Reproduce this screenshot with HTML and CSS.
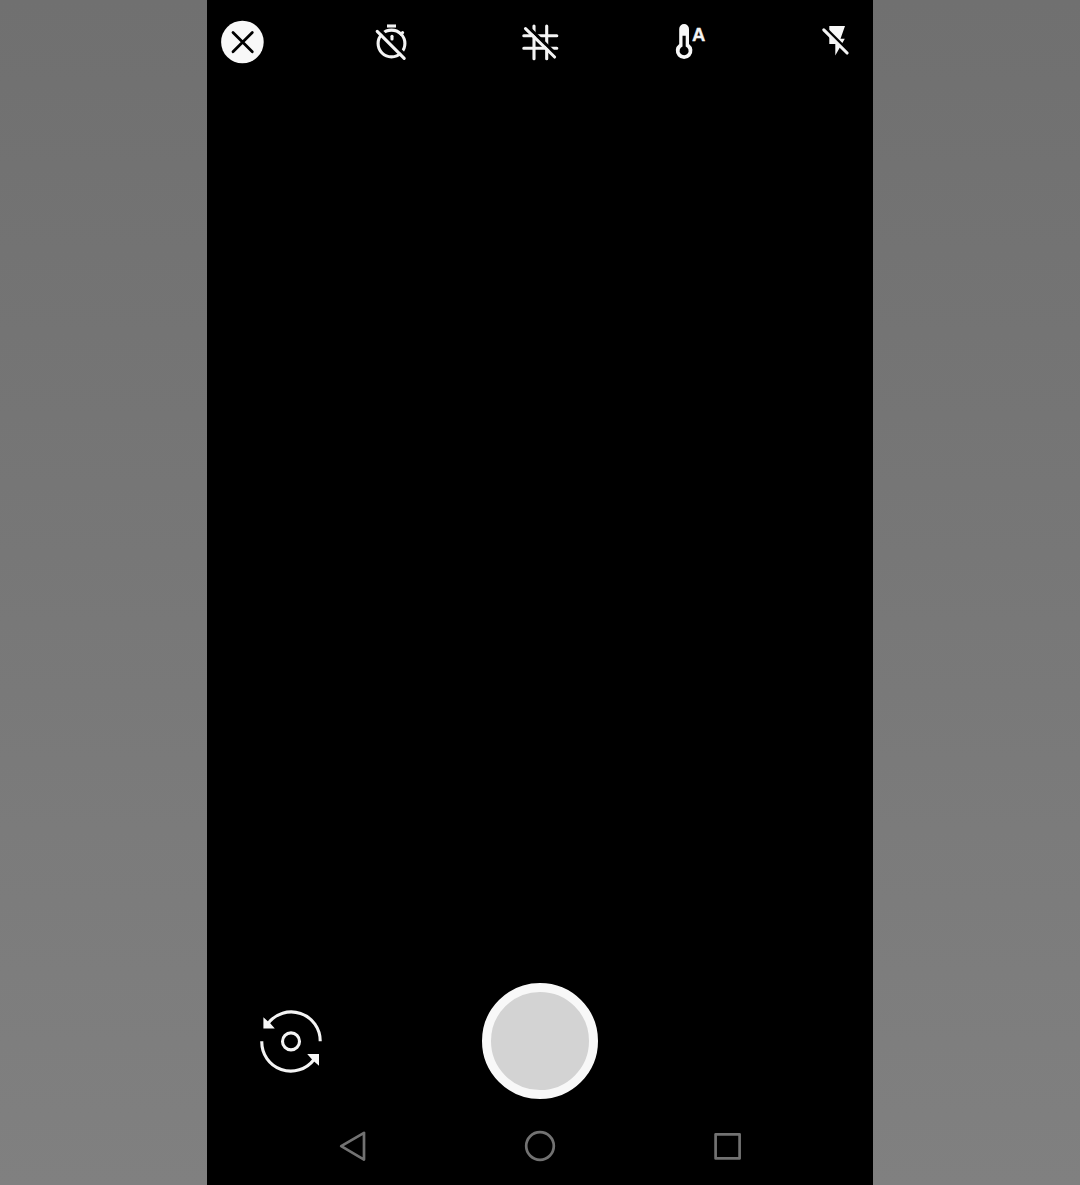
FILE: index.html
```html
<!DOCTYPE html>
<html lang="en">
<head>
<meta charset="utf-8">
<title>Camera</title>
<link rel="stylesheet" href="styles.css">
</head>
<body>
<main class="phone">
  <header class="toolbar">
    <svg class="tool" viewBox="0 0 64 64" role="img" aria-label="Close">
      <circle class="fill" cx="32.4" cy="32" r="21.3"/>
      <path class="cross" d="M23 22.5 42.3 41.7M42.3 22.5 23 41.7"/>
    </svg>
    <svg class="tool" viewBox="0 0 64 64" role="img" aria-label="Timer off">
      <circle class="line" cx="32.5" cy="33.5" r="13.4"/>
      <path class="line" d="M42 24.2 43.6 22.6"/>
      <path class="gap" d="M20 19 49 48"/>
      <path class="line butt" d="M28 16H37"/>
      <path class="line" d="M33 26.3V29"/>
      <path class="line" d="M18.2 21.4 45.2 48.3"/>
    </svg>
    <svg class="tool" viewBox="0 0 64 64" role="img" aria-label="Grid off">
      <path class="line" d="M26 16V48.8M38.7 16V48.8M15.8 25.7H48.8M15.8 38.3H48.8"/>
      <path class="gap" d="M20 16.9 50 46.1"/>
      <path class="line" d="M17.5 18.7 46.6 47"/>
    </svg>
    <svg class="tool" viewBox="0 0 64 64" role="img" aria-label="Auto white balance">
      <path class="fill" d="M22.2 34V19a4.9 4.9 0 0 1 9.8 0v15a8.3 8.3 0 1 1-9.8 0z"/>
      <path class="hole" d="M25.5 25.7h3.2v10.8a4.5 4.5 0 1 1-3.2 0z"/>
      <text class="auto" x="35" y="30.7">A</text>
    </svg>
    <svg class="tool" viewBox="0 0 64 64" role="img" aria-label="Flash off">
      <path class="fill" d="M23.3 16H39l-4.5 12.8h4.3L29.3 45.5V34h-6z"/>
      <path class="gap" d="M19 17.8 44 42.8"/>
      <path class="line" d="M17.8 19.8 41.1 43"/>
    </svg>
  </header>
  <section class="viewfinder"></section>
  <section class="controls">
    <svg class="switch" viewBox="-1 -1 84 84" role="img" aria-label="Switch camera">
      <circle class="line" cx="41" cy="41.4" r="8.5"/>
      <path class="line butt" d="M18 23.5A29 29 0 0 1 70.2 41.3M11.8 41.3A29 29 0 0 0 64 59.5"/>
      <path class="fill" d="M13.4 17.2 18.6 22 20.4 23.6 24.8 28.6H13.4zM69 54V65.7L63.6 61 61.4 58.8 57.2 54z"/>
    </svg>
    <button class="shutter" aria-label="Take photo"></button>
  </section>
  <nav class="navbar">
    <svg class="nav" viewBox="0 0 50 50" role="img" aria-label="Back"><path d="M13.2 25.2 36 11.8V38.6z"/></svg>
    <svg class="nav" viewBox="0 0 50 50" role="img" aria-label="Home"><circle cx="25" cy="25" r="13.8"/></svg>
    <svg class="nav" viewBox="0 0 50 50" role="img" aria-label="Recents"><path d="M13.6 13.3H37.6V37.4H13.6z"/></svg>
  </nav>
</main>
</body>
</html>
```

FILE: styles.css
```css
body {
  margin: 0;
  height: 1185px;
  display: flex;
  justify-content: center;
  background: linear-gradient(#707070, #757575 35%, #7b7b7b 70%, #808080);
}
.phone {
  width: 666px;
  display: flex;
  flex-direction: column;
  background: #000;
}
.toolbar {
  display: flex;
  justify-content: space-between;
  padding: 10px 3px;
}
.tool {
  width: 64px;
  height: 64px;
}
.fill { fill: #f8f8f8; }
.hole { fill: #000; }
.line {
  fill: none;
  stroke: #f4f4f4;
  stroke-width: 3.1;
  stroke-linecap: round;
}
.butt { stroke-linecap: butt; }
.gap {
  fill: none;
  stroke: #000;
  stroke-width: 3.2;
}
.cross {
  fill: none;
  stroke: #000;
  stroke-width: 2.8;
  stroke-linecap: round;
}
.auto {
  fill: #f4f4f4;
  stroke: #f4f4f4;
  stroke-width: 0.3;
  font: bold 18.5px "Liberation Sans", Arial, sans-serif;
}
.viewfinder { flex: 1; }
.controls {
  height: 132px;
  display: grid;
  grid-template-columns: 168px 330px 168px;
  place-items: center;
}
.switch {
  width: 84px;
  height: 84px;
}
.shutter {
  box-sizing: border-box;
  width: 116px;
  height: 116px;
  padding: 0;
  border: 9px solid #f8f8f8;
  border-radius: 50%;
  background: #d3d3d3;
}
.navbar {
  height: 78px;
  display: grid;
  grid-template-columns: repeat(3, 187px);
  justify-content: center;
  place-items: center;
}
.nav {
  width: 50px;
  height: 50px;
  fill: none;
  stroke: #727272;
  stroke-width: 2.7;
  stroke-linejoin: round;
}
```
